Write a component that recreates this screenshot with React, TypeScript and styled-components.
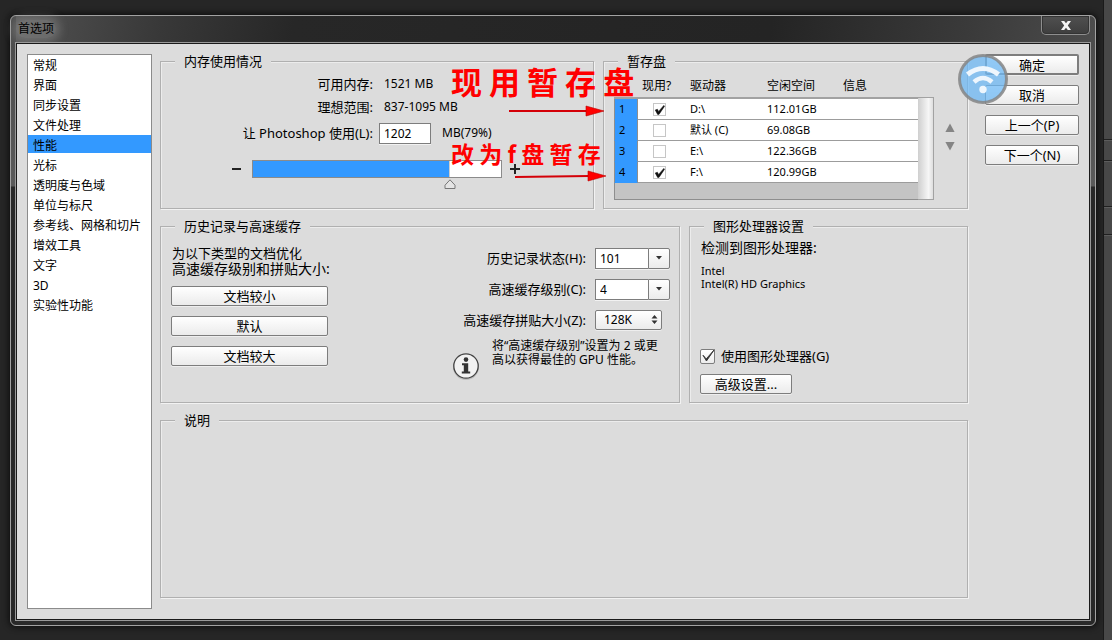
import React, { useState } from "react";
import styled, { createGlobalStyle } from "styled-components";

const GlobalStyle = createGlobalStyle`
  * { box-sizing: border-box; }
  body {
    margin: 0;
    background: #262626;
    color: #000;
    font-family: "Noto Sans", "Noto Sans CJK SC", sans-serif;
    font-size: 12px;
    line-height: 16px;
  }
  button, input, select {
    font: inherit;
    color: inherit;
    margin: 0;
  }
`;

const Desktop = styled.div`
  display: flex;
  min-height: 100vh;
`;

const Dialog = styled.section`
  position: relative;
  flex: 1;
  min-width: 0;
  display: flex;
  flex-direction: column;
  margin: 15px 7px 14px 10px;
  padding: 0 5px 5px;
  border: 1px solid #a2a2a2;
  border-radius: 6px;
  box-shadow: 0 0 6px 1px #0c0c0c;
  background:
    linear-gradient(to bottom, #4b4b4b 0, #5a5a5a 170px, #282828 171px) left / 5px 100% no-repeat,
    linear-gradient(to bottom, #4b4b4b 0, #5a5a5a 170px, #282828 171px) right / 5px 100% no-repeat,
    linear-gradient(100deg, #5c5c5c 0, #484848 60px, #383838 150px, #272727 280px, #242424 70%, #3a3a3a 88%, #4c4c4c 100%) top / 100% 28px no-repeat,
    #2a2a2a;
`;

const TitleBar = styled.header`
  display: flex;
  justify-content: space-between;
  height: 27px;
`;

const Title = styled.h1`
  margin: 4px 0 0;
  padding: 0 2px;
  height: 18px;
  font-size: 12px;
  font-weight: 400;
  line-height: 18px;
  border-radius: 9px;
  background: rgba(150, 150, 150, 0.4);
  box-shadow: 0 0 8px 4px rgba(150, 150, 150, 0.4);
`;

const CloseButton = styled.button`
  display: flex;
  align-items: center;
  justify-content: center;
  width: 49px;
  height: 19px;
  padding: 0;
  border: 1px solid #8e8e8e;
  border-top: 0;
  border-radius: 0 0 5px 5px;
  background: linear-gradient(#505050, #3e3e3e);
  box-shadow: inset 0 0 0 1px #333;
`;

const Body = styled.div`
  flex: 1;
  display: flex;
  padding: 10px;
  background: #dcdcdc;
  border: 1px solid #1a1a1a;
  outline: 1px solid #999;
`;

const Sidebar = styled.nav`
  flex: none;
  width: 125px;
  border: 1px solid #8b8b8b;
  background: #fff;
`;

const SidebarList = styled.ul`
  margin: 0;
  padding: 0;
  list-style: none;
`;

const SidebarItem = styled.button<{ $active: boolean }>`
  display: block;
  width: 100%;
  height: 18px;
  margin-bottom: 2px;
  padding: 2px 5px 0;
  border: 0;
  background: ${(p) => (p.$active ? "#3399ff" : "transparent")};
  line-height: 18px;
  text-align: left;
  white-space: nowrap;
`;

const Main = styled.main`
  flex: 1;
  min-width: 0;
  display: flex;
  flex-direction: column;
  gap: 10px;
  margin: 0 17px 0 8px;
  padding-bottom: 11px;
`;

const GroupRow = styled.div`
  display: flex;
  gap: 9px;
`;

const Group = styled.fieldset<{ $width?: number; $height?: number }>`
  flex: ${(p) => (p.$width ? `0 0 ${p.$width}px` : "1 1 0")};
  min-width: 0;
  min-height: ${(p) => p.$height ?? 0}px;
  margin: 0;
  padding: 0 0 0 10px;
  border: 1px solid #b0b0b0;
  box-shadow: 1px 1px 0 #f2f2f2, inset 1px 1px 0 #ececec;
`;

const Legend = styled.legend`
  margin-left: 4px;
  padding: 0 9px;
  background: #dcdcdc;
  font-size: 13px;
  line-height: 15px;
`;

const ActionColumn = styled.div`
  flex: none;
  display: flex;
  flex-direction: column;
  gap: 10px;
  width: 94px;
`;

const PushButton = styled.button<{ $width?: number; $primary?: boolean }>`
  display: block;
  flex: none;
  width: ${(p) => (p.$width ? `${p.$width}px` : "100%")};
  height: ${(p) => (p.$primary ? 21 : 20)}px;
  padding: 0;
  border: ${(p) => (p.$primary ? 2 : 1)}px solid #7d7d7d;
  border-radius: 2px;
  background: linear-gradient(#fff, #ebebeb);
  box-shadow: 0 1px 0 #eee;
  font-size: 13px;
  line-height: 16px;
`;

const MemoryGrid = styled.div`
  display: grid;
  grid-template-columns: 202px 1fr;
  grid-template-rows: 23px 23px 30px;
  column-gap: 11px;
  align-items: center;
  padding-top: 3px;
`;

const FieldLabel = styled.label`
  text-align: right;
  font-size: 13px;
  white-space: nowrap;
`;

const FieldValue = styled.span`
  white-space: nowrap;
`;

const MemoryAmount = styled.div`
  display: flex;
  align-items: center;
  gap: 11px;
  margin-left: -5px;
`;

const TextBox = styled.input`
  width: 52px;
  height: 21px;
  padding: 0 4px;
  border: 1px solid #7d7d7d;
  background: #fff;
  box-shadow: 0 1px 0 #f2f2f2;
  outline: 0;
  font-size: 12px;
`;

const SliderRow = styled.div`
  display: flex;
  align-items: flex-start;
  gap: 8px;
  margin: 12px 0 0 61px;
`;

const StepButton = styled.button`
  display: flex;
  align-items: center;
  width: 12px;
  height: 18px;
  padding: 0;
  border: 0;
  background: none;
`;

const Slider = styled.div`
  position: relative;
  width: 250px;
`;

const SliderInput = styled.input<{ $percent: number }>`
  display: block;
  appearance: none;
  width: 100%;
  height: 18px;
  border: 1px solid #8b8b8b;
  background: linear-gradient(to right, #3399ff ${(p) => p.$percent}%, #8b8b8b ${(p) => p.$percent}%, #fff calc(${(p) => p.$percent}% + 1px));
  &::-webkit-slider-thumb {
    appearance: none;
    width: 2px;
    height: 16px;
    background: transparent;
  }
`;

const SliderThumb = styled.svg`
  position: absolute;
  top: 19px;
  margin-left: -6px;
  pointer-events: none;
`;

const ScratchArea = styled.div`
  display: flex;
  padding-top: 6px;
`;

const ScratchList = styled.div`
  width: 304px;
`;

const ScratchTable = styled.table`
  width: 100%;
  table-layout: fixed;
  border-collapse: separate;
  border-spacing: 0;
`;

const HeadCell = styled.th<{ $width?: number }>`
  width: ${(p) => (p.$width ? `${p.$width}px` : "auto")};
  height: 24px;
  padding: 0;
  border-bottom: 2px solid #a2a2a2;
  font-weight: 400;
  line-height: 22px;
  text-align: left;
  vertical-align: top;
  white-space: nowrap;
`;

const HeadText = styled.span<{ $pull?: boolean }>`
  display: block;
  margin-left: ${(p) => (p.$pull ? 4 : 0)}px;
`;

const Cell = styled.td`
  height: 21px;
  padding: 0;
  border-bottom: 1px solid #9c9c9c;
  background: #fff;
  font-size: 11px;
  line-height: 16px;
  white-space: nowrap;
`;

const NumberCell = styled(Cell)`
  padding-left: 4px;
  border-left: 1px solid #8e8e8e;
  border-right: 1px solid #8e8e8e;
  border-bottom-color: #3399ff;
  background: #3399ff;
`;

const CheckCell = styled(Cell)`
  padding-left: 15px;
`;

const ListFiller = styled.div`
  height: 17px;
  border: solid #8e8e8e;
  border-width: 0 0 1px 1px;
  background: #c4c4c4;
`;

const ScrollTrack = styled.div`
  width: 16px;
  margin-top: 22px;
  border: solid #a2a2a2;
  border-width: 1px 1px 1px 0;
  background: linear-gradient(to right, #cfcfcf, #f6f6f6 70%, #dedede);
`;

const OrderButtons = styled.div`
  display: flex;
  flex-direction: column;
  gap: 8px;
  margin: 48px 0 0 11px;
`;

const OrderButton = styled.button`
  display: block;
  width: 10px;
  height: 10px;
  padding: 0;
  border: 0;
  background: none;
  line-height: 0;
`;

const CheckWrap = styled.span<{ $size: number }>`
  position: relative;
  display: block;
  flex: none;
  width: ${(p) => p.$size}px;
  height: ${(p) => p.$size}px;
`;

const CheckInput = styled.input<{ $heavy?: boolean }>`
  display: block;
  appearance: none;
  width: 100%;
  height: 100%;
  border: 1px solid ${(p) => (p.$heavy ? "#7d7d7d" : "#c6c6c6")};
  border-radius: ${(p) => (p.$heavy ? 2 : 0)}px;
  background: ${(p) => (p.$heavy ? "linear-gradient(#fff, #ececec)" : "#fff")};
`;

const CheckMark = styled.svg`
  position: absolute;
  top: 0;
  left: 0;
  overflow: visible;
  pointer-events: none;
`;

const HistoryColumns = styled.div`
  display: flex;
  justify-content: space-between;
`;

const PresetColumn = styled.div`
  display: flex;
  flex-direction: column;
  gap: 10px;
  padding-top: 12px;
`;

const PresetHint = styled.p`
  margin: 0;
  padding-left: 1px;
  font-size: 13px;
  line-height: 15px;
  white-space: nowrap;
`;

const WideLine = styled.span`
  display: block;
  font-size: 14px;
`;

const CacheColumn = styled.div`
  padding: 13px 9px 0 0;
`;

const CacheGrid = styled.div`
  display: grid;
  grid-template-columns: 1fr 75px;
  grid-auto-rows: 22px;
  gap: 9px;
  align-items: center;
`;

const Combo = styled.div`
  display: flex;
  width: 75px;
  height: 21px;
`;

const ComboInput = styled(TextBox)`
  flex: 1;
  min-width: 0;
  border-right: 0;
`;

const ComboButton = styled.button`
  display: flex;
  align-items: center;
  justify-content: center;
  width: 22px;
  height: 21px;
  padding: 0;
  border: 1px solid #7d7d7d;
  border-radius: 0 2px 2px 0;
  background: linear-gradient(#fff, #ebebeb);
  box-shadow: 0 1px 0 #f2f2f2;
`;

const SelectWrap = styled.div`
  position: relative;
  width: 67px;
`;

const Select = styled.select`
  display: block;
  appearance: none;
  width: 100%;
  height: 20px;
  padding: 0 8px;
  border: 1px solid #7d7d7d;
  border-radius: 2px;
  background: linear-gradient(#fff, #ebebeb);
  box-shadow: 0 1px 0 #eee;
`;

const SelectArrows = styled.svg`
  position: absolute;
  top: 5px;
  right: 4px;
  pointer-events: none;
`;

const Note = styled.div`
  display: flex;
  gap: 12px;
  margin-top: 8px;
`;

const NoteIcon = styled.svg`
  flex: none;
  margin-top: 13px;
`;

const NoteText = styled.p`
  margin: 0;
  width: 178px;
  line-height: 14px;
  white-space: nowrap;
`;

const GpuContent = styled.div`
  display: flex;
  flex-direction: column;
  align-items: flex-start;
  padding-top: 6px;
`;

const GpuHeading = styled.span`
  padding-left: 1px;
  font-size: 14px;
`;

const GpuName = styled.p`
  margin: 8px 0 58px;
  padding-left: 1px;
  font-size: 11px;
  line-height: 13px;
`;

const CheckLabel = styled.label`
  display: flex;
  align-items: center;
  gap: 6px;
  margin-bottom: 10px;
  font-size: 13px;
  line-height: 16px;
`;

const Annotations = styled.div`
  position: absolute;
  inset: 0;
  pointer-events: none;
`;

const RedNote = styled.span<{ $top: number; $size: number }>`
  position: absolute;
  left: 440px;
  top: ${(p) => p.$top}px;
  color: #f00;
  font-family: "Noto Sans CJK SC", sans-serif;
  font-size: ${(p) => p.$size}px;
  font-weight: 700;
  line-height: 36px;
  white-space: nowrap;
`;

const RedArrow = styled.svg<{ $left: number; $top: number }>`
  position: absolute;
  left: ${(p) => p.$left}px;
  top: ${(p) => p.$top}px;
`;

const WifiBadge = styled.svg`
  position: absolute;
  top: 38px;
  right: 87px;
`;

const Backdrop = styled.aside`
  flex: none;
  display: flex;
  flex-direction: column;
  width: 9px;
  border-left: 1px solid #1a1a1a;
  background: #484848;
`;

const BackdropPane = styled.div<{ $height: number }>`
  height: ${(p) => p.$height}px;
  border-bottom: 1px solid #202020;
  box-shadow: 0 1px 0 #5c5c5c;
`;

const categories = [
  "常规", "界面", "同步设置", "文件处理", "性能", "光标", "透明度与色域",
  "单位与标尺", "参考线、网格和切片", "增效工具", "文字", "3D", "实验性功能",
];

const initialDrives = [
  { name: "D:\\", free: "112.01GB", active: true },
  { name: "默认 (C)", free: "69.08GB", active: false },
  { name: "E:\\", free: "122.36GB", active: false },
  { name: "F:\\", free: "120.99GB", active: true },
];

type TickProps = {
  id?: string;
  label?: string;
  size: number;
  heavy?: boolean;
  checked: boolean;
  onChange: () => void;
};

function Tick({ id, label, size, heavy, checked, onChange }: TickProps) {
  return (
    <CheckWrap $size={size}>
      <CheckInput id={id} type="checkbox" aria-label={label} $heavy={heavy} checked={checked} onChange={onChange} />
      {checked && (
        <CheckMark width={size} height={size} viewBox="0 0 13 13" aria-hidden="true">
          {heavy ? (
            <path d="M2.6 5.4L5.4 8.6L12.4 .6L5.6 10.4Z" fill="#333" stroke="#333" strokeWidth=".8" strokeLinejoin="round" />
          ) : (
            <path d="M2.2 7L4.4 6.2L5.6 8.4L10.8 2.4L11.6 3.2L6 11.4L4.6 11.4Z" fill="#111" stroke="#111" strokeWidth=".5" />
          )}
        </CheckMark>
      )}
    </CheckWrap>
  );
}

function DropArrow() {
  return (
    <svg width="6" height="4" viewBox="0 0 6 4" aria-hidden="true">
      <path d="M0 0H6L3 3.6Z" fill="#333" />
    </svg>
  );
}

function Arrow({ left, top, length, tilt }: { left: number; top: number; length: number; tilt: number }) {
  return (
    <RedArrow $left={left} $top={top} width={length} height="12" viewBox={`0 0 ${length} 12`} aria-hidden="true">
      <path d={`M0 ${6 + tilt}L${length - 18} 6`} stroke="#d40008" strokeWidth="2" />
      <path d={`M${length - 19} 1L${length - 1} 6L${length - 19} 11Z`} fill="#f00" stroke="#b00" strokeWidth=".6" />
    </RedArrow>
  );
}

export default function App() {
  const [category, setCategory] = useState("性能");
  const [percent, setPercent] = useState(79);
  const [drives, setDrives] = useState(initialDrives);
  const [useGpu, setUseGpu] = useState(true);

  const toggleDrive = (index: number) =>
    setDrives(drives.map((d, i) => (i === index ? { ...d, active: !d.active } : d)));

  return (
    <Desktop>
      <GlobalStyle />
      <Dialog role="dialog" aria-labelledby="dialog-title">
        <TitleBar>
          <Title id="dialog-title">首选项</Title>
          <CloseButton type="button" aria-label="关闭">
            <svg width="12" height="9" viewBox="0 0 12 9" aria-hidden="true">
              <path d="M1 0H4.2L6 2.3L7.8 0H11L7.8 4.5L11 9H7.8L6 6.7L4.2 9H1L4.2 4.5Z" fill="#f4f4f4" />
            </svg>
          </CloseButton>
        </TitleBar>

        <Body>
          <Sidebar aria-label="类别">
            <SidebarList>
              {categories.map((name) => (
                <li key={name}>
                  <SidebarItem type="button" $active={name === category} onClick={() => setCategory(name)}>
                    {name}
                  </SidebarItem>
                </li>
              ))}
            </SidebarList>
          </Sidebar>

          <Main>
            <GroupRow>
              <Group $height={155}>
                <Legend>内存使用情况</Legend>
                <MemoryGrid>
                  <FieldLabel as="span">可用内存:</FieldLabel>
                  <FieldValue>1521 MB</FieldValue>
                  <FieldLabel as="span">理想范围:</FieldLabel>
                  <FieldValue>837-1095 MB</FieldValue>
                  <FieldLabel htmlFor="memory">让 Photoshop 使用(L):</FieldLabel>
                  <MemoryAmount>
                    <TextBox id="memory" defaultValue="1202" />
                    <FieldValue>MB({percent}%)</FieldValue>
                  </MemoryAmount>
                </MemoryGrid>
                <SliderRow>
                  <StepButton type="button" aria-label="减少" onClick={() => setPercent(Math.max(0, percent - 1))}>
                    <svg width="12" height="12" viewBox="0 0 12 12" aria-hidden="true">
                      <path d="M0 6H9" stroke="#222" strokeWidth="2" />
                    </svg>
                  </StepButton>
                  <Slider>
                    <SliderInput
                      type="range"
                      aria-label="内存使用百分比"
                      min="0"
                      max="100"
                      value={percent}
                      $percent={percent}
                      onChange={(e) => setPercent(Number(e.target.value))}
                    />
                    <SliderThumb style={{ left: `${percent}%` }} width="12" height="11" viewBox="0 0 12 11" aria-hidden="true">
                      <path d="M6 .8L11 6.2V9.5H1V6.2Z" fill="#e4e4e4" stroke="#777" />
                    </SliderThumb>
                  </Slider>
                  <StepButton type="button" aria-label="增加" onClick={() => setPercent(Math.min(100, percent + 1))}>
                    <svg width="12" height="12" viewBox="0 0 12 12" aria-hidden="true">
                      <path d="M0 6H10M5 1V11" stroke="#222" strokeWidth="2" />
                    </svg>
                  </StepButton>
                </SliderRow>
              </Group>

              <Group $width={365} $height={155}>
                <Legend>暂存盘</Legend>
                <ScratchArea>
                  <ScratchList>
                    <ScratchTable>
                      <thead>
                        <tr>
                          <HeadCell $width={24} aria-label="序号" />
                          <HeadCell $width={52}><HeadText $pull>现用?</HeadText></HeadCell>
                          <HeadCell $width={77}>驱动器</HeadCell>
                          <HeadCell $width={76}>空闲空间</HeadCell>
                          <HeadCell>信息</HeadCell>
                        </tr>
                      </thead>
                      <tbody>
                        {drives.map((drive, i) => (
                          <tr key={drive.name}>
                            <NumberCell>{i + 1}</NumberCell>
                            <CheckCell>
                              <Tick size={13} label={`现用 ${drive.name}`} checked={drive.active} onChange={() => toggleDrive(i)} />
                            </CheckCell>
                            <Cell>{drive.name}</Cell>
                            <Cell>{drive.free}</Cell>
                            <Cell />
                          </tr>
                        ))}
                      </tbody>
                    </ScratchTable>
                    <ListFiller />
                  </ScratchList>
                  <ScrollTrack />
                  <OrderButtons>
                    <OrderButton type="button" aria-label="上移">
                      <svg width="10" height="10" viewBox="0 0 10 10" aria-hidden="true">
                        <path d="M5 .5L9.6 9H.4Z" fill="#858585" />
                      </svg>
                    </OrderButton>
                    <OrderButton type="button" aria-label="下移">
                      <svg width="10" height="10" viewBox="0 0 10 10" aria-hidden="true">
                        <path d="M.4 1H9.6L5 9.5Z" fill="#858585" />
                      </svg>
                    </OrderButton>
                  </OrderButtons>
                </ScratchArea>
              </Group>
            </GroupRow>

            <GroupRow>
              <Group $height={184}>
                <Legend>历史记录与高速缓存</Legend>
                <HistoryColumns>
                  <PresetColumn>
                    <PresetHint>
                      为以下类型的文档优化
                      <WideLine>高速缓存级别和拼贴大小:</WideLine>
                    </PresetHint>
                    <PushButton type="button" $width={157}>文档较小</PushButton>
                    <PushButton type="button" $width={157}>默认</PushButton>
                    <PushButton type="button" $width={157}>文档较大</PushButton>
                  </PresetColumn>
                  <CacheColumn>
                    <CacheGrid>
                      <FieldLabel htmlFor="history-states">历史记录状态(H):</FieldLabel>
                      <Combo>
                        <ComboInput id="history-states" defaultValue="101" />
                        <ComboButton type="button" aria-label="历史记录状态选项"><DropArrow /></ComboButton>
                      </Combo>
                      <FieldLabel htmlFor="cache-levels">高速缓存级别(C):</FieldLabel>
                      <Combo>
                        <ComboInput id="cache-levels" defaultValue="4" />
                        <ComboButton type="button" aria-label="高速缓存级别选项"><DropArrow /></ComboButton>
                      </Combo>
                      <FieldLabel htmlFor="tile-size">高速缓存拼贴大小(Z):</FieldLabel>
                      <SelectWrap>
                        <Select id="tile-size" defaultValue="128K">
                          <option>128K</option>
                          <option>132K</option>
                          <option>1024K</option>
                        </Select>
                        <SelectArrows width="7" height="9" viewBox="0 0 7 9" aria-hidden="true">
                          <path d="M3.5 0L6.5 3.4H.5ZM3.5 9L6.5 5.6H.5Z" fill="#333" />
                        </SelectArrows>
                      </SelectWrap>
                    </CacheGrid>
                    <Note>
                      <NoteIcon width="28" height="29" viewBox="0 0 28 29" aria-hidden="true">
                        <circle cx="14" cy="15" r="13" fill="#bdbdbd" />
                        <circle cx="14" cy="14" r="12.2" fill="#f2f2f2" stroke="#444" strokeWidth="1.3" />
                        <circle cx="14" cy="7.6" r="2.3" fill="#333" />
                        <path d="M10 11.2H16.2V19.4H18.2V21.4H9.8V19.4H11.8V13.2H10Z" fill="#333" />
                      </NoteIcon>
                      <NoteText>
                        将“高速缓存级别”设置为 2 或更<br />
                        高以获得最佳的 GPU 性能。
                      </NoteText>
                    </Note>
                  </CacheColumn>
                </HistoryColumns>
              </Group>

              <Group $width={279} $height={184}>
                <Legend>图形处理器设置</Legend>
                <GpuContent>
                  <GpuHeading>检测到图形处理器:</GpuHeading>
                  <GpuName>
                    Intel<br />
                    Intel(R) HD Graphics
                  </GpuName>
                  <CheckLabel htmlFor="use-gpu">
                    <Tick id="use-gpu" size={15} heavy checked={useGpu} onChange={() => setUseGpu(!useGpu)} />
                    使用图形处理器(G)
                  </CheckLabel>
                  <PushButton type="button" $width={92}>高级设置...</PushButton>
                </GpuContent>
              </Group>
            </GroupRow>

            <Group $height={185}>
              <Legend>说明</Legend>
            </Group>
          </Main>

          <ActionColumn>
            <PushButton type="button" $primary>确定</PushButton>
            <PushButton type="button">取消</PushButton>
            <PushButton type="button">上一个(P)</PushButton>
            <PushButton type="button">下一个(N)</PushButton>
          </ActionColumn>
        </Body>

        <Annotations>
          <RedNote $top={47} $size={31}>现 用 暂 存 盘</RedNote>
          <Arrow left={498} top={89} length={96} tilt={0} />
          <RedNote $top={119} $size={23}>改 为 f 盘 暂 存</RedNote>
          <Arrow left={504} top={154} length={92} tilt={1} />
          <WifiBadge width="50" height="50" viewBox="0 0 50 50" aria-hidden="true">
            <circle cx="25" cy="25" r="23.5" fill="#6db8f4" fillOpacity=".75" stroke="#858585" strokeOpacity=".85" strokeWidth="3" />
            <path d="M9.500 20.500Q25 8.500 40.500 20.500" fill="none" stroke="#eef6fd" strokeWidth="5" />
            <path d="M16 28Q25 20 34 28" fill="none" stroke="#eef6fd" strokeWidth="4.500" />
            <circle cx="25" cy="35.500" r="3.700" fill="#eef6fd" />
          </WifiBadge>
        </Annotations>
      </Dialog>
      <Backdrop aria-hidden="true">
        <BackdropPane $height={140} />
        <BackdropPane $height={21} />
        <BackdropPane $height={46} />
        <BackdropPane $height={28} />
      </Backdrop>
    </Desktop>
  );
}
